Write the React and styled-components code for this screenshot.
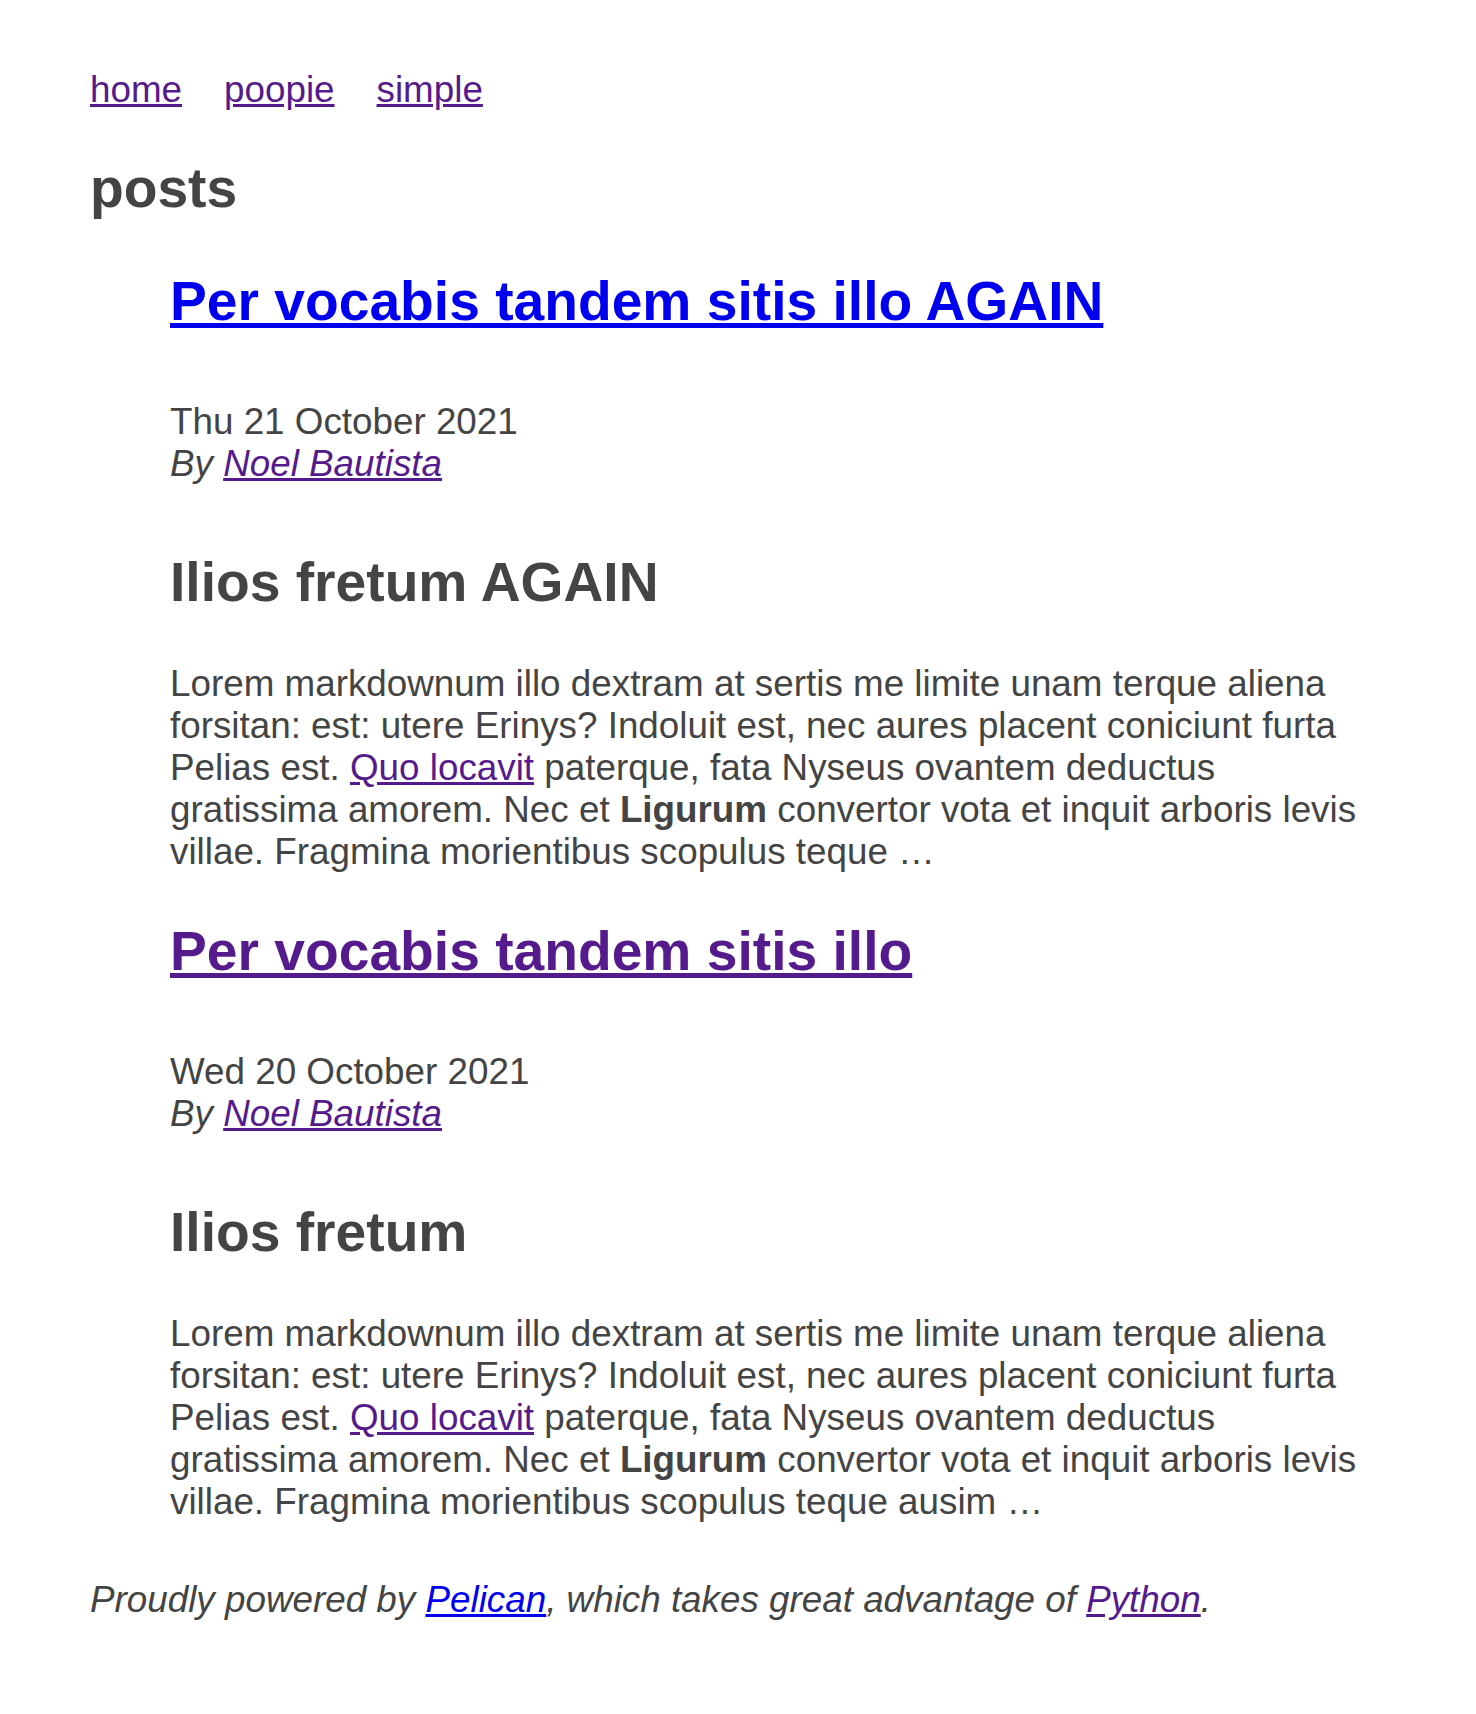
import { createGlobalStyle, styled } from "styled-components";

const GlobalStyle = createGlobalStyle`
  html, body {
    margin: 0;
    background: #fff;
  }
  body {
    font-family: "Liberation Sans", Arial, sans-serif;
    font-size: 36.8px;
    line-height: normal;
    color: #444;
  }
`;

// unvisited links are blue, visited ones purple, as the browser defaults
const Link = styled.a`
  color: ${({ $visited }) => ($visited ? "#551a8b" : "#0000ee")};
  text-decoration: underline;
`;

const Page = styled.div`
  padding: 69px 90px 80px;
`;

const Menu = styled.ul`
  display: flex;
  gap: 42px;
  list-style: none;
  margin: 0;
  padding: 0;
`;

const SectionTitle = styled.h2`
  font-size: 55.2px;
  font-weight: bold;
  margin: 45px 0 0;
`;

const PostList = styled.ol`
  list-style: none;
  margin: 49px 0 0;
  padding: 0 0 0 80px;
`;

const PostItem = styled.li`
  & + & {
    margin-top: 46px;
  }
`;

const EntryTitle = styled.h2`
  font-size: 55.2px;
  font-weight: bold;
  margin: 0;
`;

const PostInfo = styled.footer`
  margin-top: 68px;
`;

const Author = styled.address`
  font-style: italic;
`;

const SubHeading = styled.h2`
  font-size: 55.2px;
  font-weight: bold;
  margin: 65px 0 49px;
`;

const Summary = styled.p`
  margin: 0;
`;

const SiteFooter = styled.address`
  font-style: italic;
  margin-top: 56px;
`;

const posts = [
  {
    title: "Per vocabis tandem sitis illo AGAIN",
    visited: false,
    date: "Thu 21 October 2021",
    heading: "Ilios fretum AGAIN",
    tail: "villae. Fragmina morientibus scopulus teque …",
  },
  {
    title: "Per vocabis tandem sitis illo",
    visited: true,
    date: "Wed 20 October 2021",
    heading: "Ilios fretum",
    tail: "villae. Fragmina morientibus scopulus teque ausim …",
  },
];

export default function App() {
  return (
    <>
      <GlobalStyle />
      <Page>
        <nav>
          <Menu>
            <li><Link $visited href="#">home</Link></li>
            <li><Link $visited href="#">poopie</Link></li>
            <li><Link $visited href="#">simple</Link></li>
          </Menu>
        </nav>
        <SectionTitle>posts</SectionTitle>
        <PostList>
          {posts.map((post) => (
            <PostItem key={post.title}>
              <article>
                <header>
                  <EntryTitle>
                    <Link $visited={post.visited} href="#">{post.title}</Link>
                  </EntryTitle>
                </header>
                <PostInfo>
                  <time>{post.date}</time>
                  <Author>
                    By <Link $visited href="#">Noel Bautista</Link>
                  </Author>
                </PostInfo>
                <div>
                  <SubHeading>{post.heading}</SubHeading>
                  <Summary>
                    Lorem markdownum illo dextram at sertis me limite unam terque aliena
                    forsitan: est: utere Erinys? Indoluit est, nec aures placent coniciunt
                    furta Pelias est. <Link $visited href="#">Quo locavit</Link> paterque,
                    fata Nyseus ovantem deductus gratissima amorem. Nec et{" "}
                    <strong>Ligurum</strong> convertor vota et inquit arboris levis{" "}
                    {post.tail}
                  </Summary>
                </div>
              </article>
            </PostItem>
          ))}
        </PostList>
        <SiteFooter>
          Proudly powered by <Link href="#">Pelican</Link>, which takes great
          advantage of <Link $visited href="#">Python</Link>.
        </SiteFooter>
      </Page>
    </>
  );
}
